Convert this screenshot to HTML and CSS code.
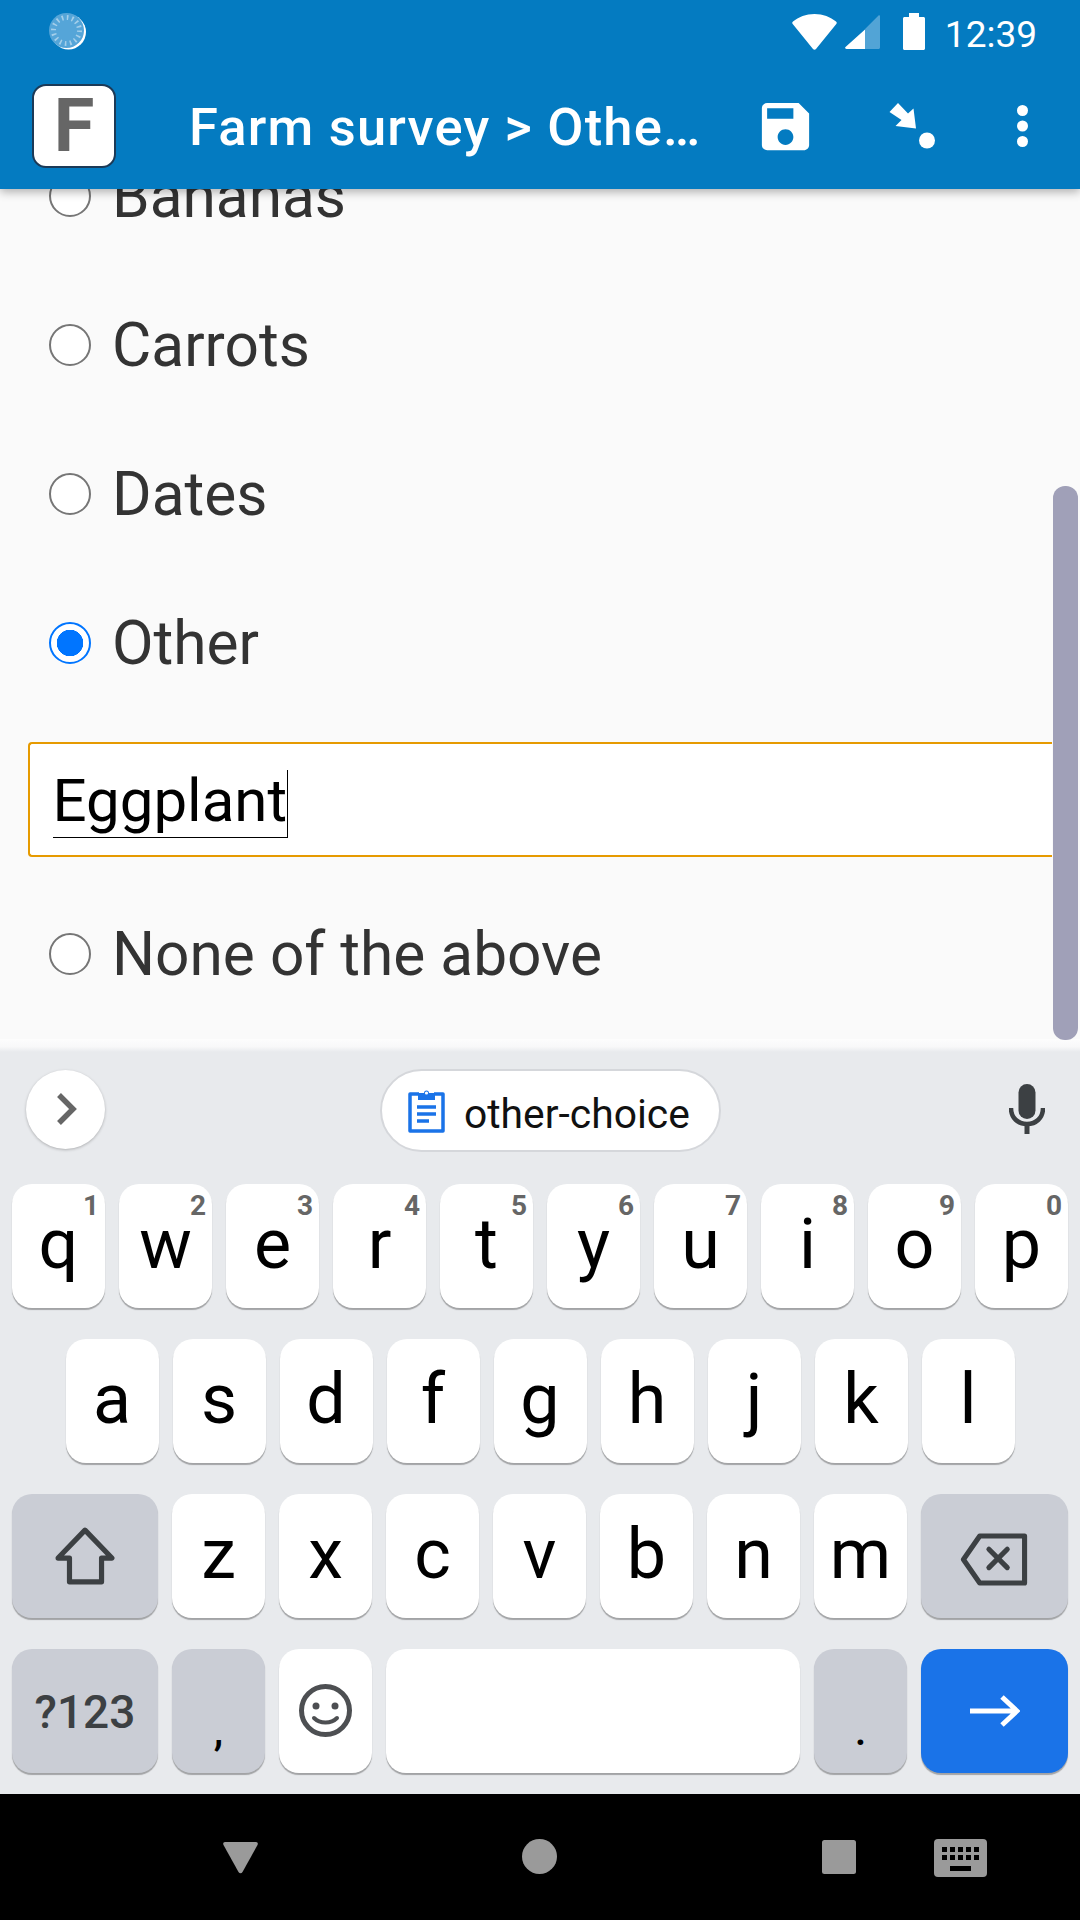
FILE: index.html
```html
<!DOCTYPE html>
<html lang="en">
<head>
<meta charset="utf-8">
<title>Farm survey</title>
<link rel="stylesheet" href="styles.css">
</head>
<body>
<div class="screen">
  <header class="appbar">
    <div class="status">
      <svg class="notif" width="38" height="37" viewBox="0 0 38 37"><circle cx="19.5" cy="19" r="17.5" fill="#fff"/><circle cx="17.5" cy="17.5" r="17.5" fill="#55a5d8"/><circle cx="17.5" cy="17.5" r="13" fill="none" stroke="#a5cfea" stroke-width="5" stroke-dasharray="1.6 3.5"/></svg>
      <svg class="wifi" width="45" height="36" viewBox="0 0 45 36"><path fill="#fff" d="M22.5 0C14 0 6.5 3 1 7.5c-1 1-1 1.500-.3 2.500L21 35c.8 1 2.200 1 3 0L44.300 10c.7-1 .7-1.500-.3-2.500C38.500 3 31 0 22.500 0z"/></svg>
      <svg class="signal" width="35" height="34" viewBox="0 0 35 34"><path fill="#52a4d6" d="M20 14 33.500.5c.7-.7 1.500-.3 1.500.5v31.500c0 .8-.7 1.500-1.500 1.500H20z"/><path fill="#fff" d="M20 14.500V34H1.500C.3 34-.3 32.700.5 32z"/></svg>
      <svg class="battery" width="22" height="37" viewBox="0 0 22 37"><path fill="#fff" d="M6 0h10v4h4.500c.8 0 1.500.7 1.500 1.500V35.500c0 .8-.7 1.500-1.500 1.500H1.500C.7 37 0 36.300 0 35.500V5.500C0 4.700.7 4 1.500 4H6z"/></svg>
      <span class="time">12:39</span>
    </div>
    <div class="toolbar">
      <div class="logo">F</div>
      <div class="title">Farm survey &gt; Othe…</div>
      <svg class="save" width="63" height="63" viewBox="0 0 24 24"><path fill="#fff" d="M17 3H5c-1.110 0-2 .9-2 2v14c0 1.100.89 2 2 2h14c1.100 0 2-.9 2-2V7l-4-4zm-5 16c-1.660 0-3-1.340-3-3s1.340-3 3-3 3 1.340 3 3-1.340 3-3 3zm3-10H5V5h10v4z"/></svg>
      <svg class="jump" width="46" height="46" viewBox="0 0 46 46"><polygon fill="#fff" points="0.500,9 9,0 19,10.500 24.500,5.500 27,25.500 6.500,23 12.500,17"/><circle fill="#fff" cx="38" cy="37.500" r="8"/></svg>
      <svg class="more" width="11" height="42" viewBox="0 0 11 42"><circle fill="#fff" cx="5.500" cy="5.500" r="5.500"/><circle fill="#fff" cx="5.500" cy="21" r="5.500"/><circle fill="#fff" cx="5.500" cy="36.500" r="5.500"/></svg>
    </div>
  </header>

  <main class="content">
    <label class="choice"><input class="radio" type="radio" name="crop"><span>Bananas</span></label>
    <label class="choice"><input class="radio" type="radio" name="crop"><span>Carrots</span></label>
    <label class="choice"><input class="radio" type="radio" name="crop"><span>Dates</span></label>
    <label class="choice"><input class="radio" type="radio" name="crop" checked><span>Other</span></label>
    <div class="other-input"><span class="composing">Eggplant</span></div>
    <label class="choice choice-last"><input class="radio" type="radio" name="crop"><span>None of the above</span></label>
    <div class="scrollbar"></div>
  </main>

  <section class="keyboard">
    <div class="kb-edge"></div>
    <div class="suggest">
      <div class="expand"><svg width="20" height="32" viewBox="0 0 20 32"><path fill="none" stroke="#666" stroke-width="5.500" d="M2 2l14 14L2 30"/></svg></div>
      <div class="chip">
        <svg width="37" height="45" viewBox="0 0 37 45"><path fill="none" stroke="#1a73e8" stroke-width="3.500" stroke-linejoin="round" d="M11 6H2v37h33V6h-9"/><path fill="#1a73e8" d="M10 5h6a2.500 2.500 0 0 1 5 0h6v7H10z"/><path stroke="#1a73e8" stroke-width="3.500" d="M9 19h19M9 26h19M9 33h12"/><circle cx="18.500" cy="5" r="1.600" fill="#fff"/></svg>
        <span>other-choice</span>
      </div>
      <svg class="mic" width="36" height="50" viewBox="0 0 36 50"><rect x="9.500" y="0" width="17" height="35" rx="8.500" fill="#3c4043"/><path fill="none" stroke="#3c4043" stroke-width="4.500" d="M2 24c0 10 7 16 16 16s16-6 16-16"/><rect x="15.500" y="38" width="5" height="12" fill="#3c4043"/></svg>
    </div>
    <div class="keys">
      <div class="row row-top">
        <div class="key">q<b class="hint">1</b></div>
        <div class="key">w<b class="hint">2</b></div>
        <div class="key">e<b class="hint">3</b></div>
        <div class="key">r<b class="hint">4</b></div>
        <div class="key">t<b class="hint">5</b></div>
        <div class="key">y<b class="hint">6</b></div>
        <div class="key">u<b class="hint">7</b></div>
        <div class="key">i<b class="hint">8</b></div>
        <div class="key">o<b class="hint">9</b></div>
        <div class="key">p<b class="hint">0</b></div>
      </div>
      <div class="row row-home">
        <div class="key">a</div><div class="key">s</div><div class="key">d</div><div class="key">f</div><div class="key">g</div><div class="key">h</div><div class="key">j</div><div class="key">k</div><div class="key">l</div>
      </div>
      <div class="row">
        <div class="key wide fn"><svg width="60" height="58" viewBox="0 0 58 56"><path fill="none" stroke="#3c4043" stroke-width="5" stroke-linejoin="round" d="M29 3l26 27H45v23H14V30H3z"/></svg></div>
        <div class="key">z</div><div class="key">x</div><div class="key">c</div><div class="key">v</div><div class="key">b</div><div class="key">n</div><div class="key">m</div>
        <div class="key wide-end fn"><svg class="backspace" width="68" height="53" viewBox="0 0 66 52"><path fill="none" stroke="#3c4043" stroke-width="5" stroke-linejoin="round" d="M3 26 19 3h44v46H19z"/><path stroke="#3c4043" stroke-width="5" stroke-linecap="round" d="M28 16l18 18M46 16 28 34"/></svg></div>
      </div>
      <div class="row">
        <div class="key wide fn sym">?123</div>
        <div class="key fn punct">,</div>
        <div class="key"><svg width="53" height="53" viewBox="0 0 53 53"><circle cx="26.500" cy="26.500" r="24" fill="none" stroke="#4d4f52" stroke-width="5"/><circle cx="17" cy="22" r="3.500" fill="#4d4f52"/><circle cx="36" cy="22" r="3.500" fill="#4d4f52"/><path fill="none" stroke="#4d4f52" stroke-width="4" stroke-linecap="round" d="M15 34c6 6 17 6 23 0"/></svg></div>
        <div class="key space"></div>
        <div class="key fn punct">.</div>
        <div class="key wide-end enter"><svg width="50" height="32" viewBox="0 0 50 32"><path fill="none" stroke="#fff" stroke-width="5" d="M0 16h46M32 2l15 14-15 14"/></svg></div>
      </div>
    </div>
  </section>

  <nav class="navbar">
    <svg class="nav-back" width="35" height="32" viewBox="0 0 35 32"><path fill="#9a9a9a" d="M2 0h31c1.500 0 2.300 1.500 1.500 3L19.500 30c-1 1.600-3 1.600-4 0L.5 3C-.3 1.500.5 0 2 0z"/></svg>
    <svg class="nav-home" width="35" height="35" viewBox="0 0 35 35"><circle cx="17.500" cy="17.500" r="17.500" fill="#9a9a9a"/></svg>
    <svg class="nav-recent" width="34" height="34" viewBox="0 0 34 34"><rect width="34" height="34" rx="2.500" fill="#9a9a9a"/></svg>
    <svg class="nav-kb" width="53" height="38" viewBox="0 0 53 38"><rect width="53" height="38" rx="4" fill="#9a9a9a"/><path fill="#000" d="M8 8h5v5H8zM16 8h5v5h-5zM24 8h5v5h-5zM32 8h5v5h-5zM40 8h5v5h-5zM8 16h5v5H8zM16 16h5v5h-5zM24 16h5v5h-5zM32 16h5v5h-5zM40 16h5v5h-5zM16 27h21v5H16z"/></svg>
  </nav>
</div>
</body>
</html>
```
FILE: styles.css
```css
* { box-sizing: border-box; }
html, body { margin: 0; padding: 0; }
body { font-family: Roboto, "Noto Sans", sans-serif; background: #fafafa; }

.screen { width: 1080px; height: 1920px; display: flex; flex-direction: column; overflow: hidden; }

.appbar { position: relative; z-index: 2; flex: none; height: 189px; background: #047bc1; box-shadow: 0 3px 9px rgba(0,0,0,.3); color: #fff; }
.status { height: 63px; display: flex; align-items: center; padding: 0 43px 0 49px; }
.wifi { margin-left: auto; }
.signal { margin-left: 8px; }
.battery { margin-left: 23px; }
.time { margin: 5px 0 0 20px; font-size: 37px; line-height: 1; }
.toolbar { height: 126px; display: flex; align-items: center; padding: 0 52px 0 32px; }
.logo { flex: none; width: 84px; height: 84px; background: #fff; border: 2.500px solid #1c3a57; border-radius: 14px; color: #666; font: 700 74px/79px Roboto, sans-serif; text-align: center; }
.title { flex: 1; margin: 2px 0 0 73px; font-size: 52.500px; font-weight: 500; letter-spacing: 1.200px; line-height: 1.2; white-space: nowrap; }
.save { flex: none; }
.jump { flex: none; margin-left: 72px; }
.more { flex: none; margin-left: 82px; margin-top: -1px; }

.content { position: relative; flex: 1; min-height: 0; margin-top: -68px; background: #fafafa; color: #333; font-size: 60.400px; }
.choice { height: 149px; display: flex; align-items: center; padding-left: 49px; }
.choice span { margin-top: 2px; }
.choice-last { margin-top: 22px; }
.radio { appearance: none; flex: none; width: 42px; height: 42px; margin: 0 21px 0 0; border: 2.600px solid #767676; border-radius: 50%; background: #fff; }
.radio:checked { border-color: #0075ff; background: radial-gradient(circle, #0075ff 13px, #fff 13.500px); }
.other-input { width: 1024px; height: 115px; margin: 25px 0 0 28px; padding: 21px 0 0 22.500px; background: #fff; border: 2px solid #e69a00; border-right: 0; border-radius: 4px 0 0 4px; color: #000; font-size: 60px; }
.composing { display: inline-block; height: 68px; line-height: 62px; border-bottom: 1.500px solid #000; border-right: 1.500px solid #000; }
.scrollbar { position: absolute; right: 2px; top: 365px; width: 25px; height: 554px; border-radius: 12px; background: #a0a0b8; }

.keyboard { flex: none; background: #e8eaed; padding-bottom: 21px; }
.kb-edge { height: 13px; background: linear-gradient(#fdfdfd, #f8f8f9 60%, #e8eaed); }
.suggest { height: 132px; padding: 0 35px 18px 26px; display: flex; align-items: center; }
.expand { flex: none; width: 79px; height: 79px; border-radius: 50%; background: #fff; box-shadow: 0 1px 3px rgba(0,0,0,.25); display: flex; align-items: center; justify-content: center; padding-left: 3px; }
.chip { flex: none; width: 341px; height: 83px; margin: 2px 0 0 275px; border: 2px solid #d5d7db; border-radius: 42px; background: #fff; display: flex; align-items: center; padding-left: 26px; gap: 19px; color: #111; font-size: 40.800px; }
.chip span { line-height: 1; margin-top: 8px; }
.mic { flex: none; margin-left: auto; }

.keys { display: flex; flex-direction: column; gap: 31px; }
.row { display: flex; gap: 14px; padding-left: 12px; }
.row-home { padding-left: 65.500px; }
.key { position: relative; flex: none; width: 93px; height: 124px; padding-bottom: 5px; border-radius: 20px; background: #fff; box-shadow: 0 2px 1px rgba(0,0,0,.3); display: flex; align-items: center; justify-content: center; color: #000; font-size: 70px; line-height: 1; }
.key svg { margin-top: 4px; }
.key .backspace { margin: 11px 2px 0 0; }
.hint { position: absolute; top: 8px; right: 6px; color: #666; font-size: 28px; font-weight: 700; line-height: 1; }
.wide { width: 146px; }
.wide-end { width: 147px; }
.fn { background: #cacdd5; }
.sym { color: #3c4043; font-size: 46px; font-weight: 500; padding: 1px 0 0; }
.punct { font-size: 42px; font-weight: 500; padding: 40px 0 0; }
.space { width: 414px; }
.enter { background: #1a73e8; }

.navbar { flex: none; height: 126px; background: #000; display: flex; align-items: flex-start; padding: 45px 0 0 223px; }
.nav-back { margin-top: 3px; }
.nav-home { margin-left: 264px; }
.nav-recent { margin-left: 265px; margin-top: 1px; }
.nav-kb { margin-left: 78px; }
```
